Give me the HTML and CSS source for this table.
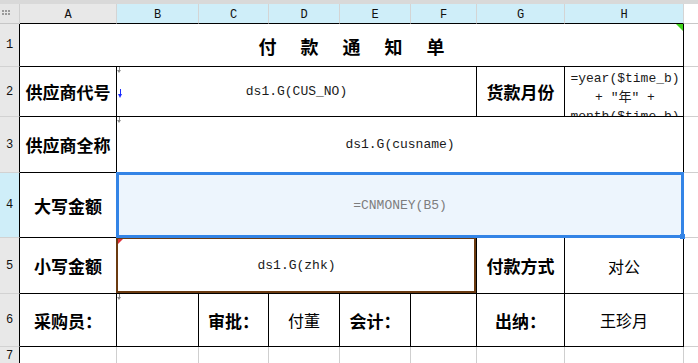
FILE: index.html
```html
<!DOCTYPE html>
<html lang="zh">
<head>
<meta charset="utf-8">
<title>付款通知单</title>
<link rel="stylesheet" href="styles.css">
</head>
<body>
<div class="band"></div>
<div class="sheet">
  <div class="corner">
    <svg width="10" height="7" viewBox="0 0 10 7"><g fill="#9a9a9a"><rect x="0" y="0" width="2" height="2"/><rect x="3" y="0" width="2" height="2"/><rect x="6" y="0" width="2" height="2"/><rect x="0" y="3" width="2" height="2"/><rect x="3" y="3" width="2" height="2"/><rect x="6" y="3" width="2" height="2"/></g></svg>
  </div>
  <div class="ch">A</div>
  <div class="ch on">B</div>
  <div class="ch on">C</div>
  <div class="ch on">D</div>
  <div class="ch on">E</div>
  <div class="ch on">F</div>
  <div class="ch on">G</div>
  <div class="ch on">H</div>
  <div class="ch blank"></div>

  <div class="rh">1</div>
  <div class="c title span8">付款通知单<span class="flag"></span></div>
  <div class="x"></div>

  <div class="rh">2</div>
  <div class="c lbl">供应商代号</div>
  <div class="c val span5">ds1.G(CUS_NO)<span class="garrow"></span><span class="barrow"></span></div>
  <div class="c lbl">货款月份</div>
  <div class="c formula">=year($time_b) + "年" + month($time_b)</div>
  <div class="x"></div>

  <div class="rh">3</div>
  <div class="c lbl">供应商全称</div>
  <div class="c val span7">ds1.G(cusname)<span class="garrow"></span></div>
  <div class="x"></div>

  <div class="rh on">4</div>
  <div class="c lbl">大写金额</div>
  <div class="c val span7 picked">=CNMONEY(B5)<span class="selbox"><span class="handle"></span></span></div>
  <div class="x"></div>

  <div class="rh">5</div>
  <div class="c lbl">小写金额</div>
  <div class="c val span5 copied">ds1.G(zhk)<span class="copybox"></span><span class="redmark"></span></div>
  <div class="c lbl">付款方式</div>
  <div class="c txt">对公</div>
  <div class="x"></div>

  <div class="rh">6</div>
  <div class="c lbl">采购员：</div>
  <div class="c"><span class="garrow"></span></div>
  <div class="c lbl">审批：</div>
  <div class="c txt">付董</div>
  <div class="c lbl">会计：</div>
  <div class="c"></div>
  <div class="c lbl">出纳：</div>
  <div class="c txt">王珍月</div>
  <div class="x"></div>

  <div class="rh last">7</div>
  <div class="e"></div>
  <div class="e"></div>
  <div class="e"></div>
  <div class="e"></div>
  <div class="e"></div>
  <div class="e"></div>
  <div class="e"></div>
  <div class="e"></div>
  <div class="x last"></div>
</div>
</body>
</html>
```
FILE: styles.css
```css
* { box-sizing: border-box; }
html, body { margin: 0; padding: 0; background: #fff; }
body { width: 698px; height: 363px; overflow: hidden; }

.band { height: 4px; background: #d9d9d9; }

.sheet {
  display: grid;
  grid-template-columns: 20px 97px 82px 70px 71px 71px 66px 88px 119px 1fr;
  grid-template-rows: 20px 43px 50px 56px 65px 56px 53px 1fr;
  height: 359px;
  font-family: "Noto Sans CJK SC", sans-serif;
}

.corner {
  background: #e6e6e6;
  border-right: 1px solid #d0d0d0;
  border-bottom: 1px solid #c6c6c6;
  display: flex;
  align-items: center;
  padding-left: 2px;
}

.ch {
  background: #e8e8e8;
  border-right: 1px solid #d4d4d4;
  border-bottom: 1px solid #000;
  display: flex;
  align-items: center;
  justify-content: center;
  padding-top: 2px;
  font-family: "Liberation Mono", monospace;
  font-size: 12px;
  color: #111;
}
.ch.on { background: #cfeef9; }
.ch.blank { background: #fff; border-right: none; border-bottom-color: #c8c8c8; }

.rh {
  background: #e8e8e8;
  border-right: 1px solid #000;
  border-bottom: 1px solid #d2d2d2;
  display: flex;
  align-items: center;
  justify-content: center;
  font-family: "Liberation Mono", monospace;
  font-size: 12px;
  color: #111;
}
.rh.on { background: #cfeef9; }
.rh.last { border-bottom: none; align-items: flex-end; }

.c {
  position: relative;
  border-right: 1px solid #000;
  border-bottom: 1px solid #000;
  display: flex;
  align-items: center;
  justify-content: center;
  color: #000;
}
.span5 { grid-column: span 5; }
.span7 { grid-column: span 7; }
.span8 { grid-column: span 8; }

.title {
  font-size: 18px;
  font-weight: 700;
  letter-spacing: 24px;
  padding-left: 24px;
  padding-top: 1px;
}

.lbl { font-size: 17px; font-weight: 700; }
.txt { font-size: 16px; font-weight: 400; }

.val {
  font-family: "Liberation Mono", "Noto Sans CJK SC", monospace;
  font-size: 13px;
  color: #1a1a1a;
}

.formula {
  align-items: flex-start;
  text-align: center;
  overflow: hidden;
  padding: 2px 1px 0 3px;
  font-family: "Liberation Mono", "Noto Sans CJK SC", monospace;
  font-size: 13px;
  line-height: 19px;
  color: #1a1a1a;
}

.picked { background: #edf5fd; color: #7d7d7d; }

.selbox {
  position: absolute;
  left: -1px; top: -1px; right: -1px; bottom: -1px;
  border: 3px solid #3384e6;
  z-index: 3;
}
.handle {
  position: absolute;
  right: -4px; bottom: -4px;
  width: 5px; height: 5px;
  background: #3384e6;
}

.copybox {
  position: absolute;
  left: -1px; top: -1px; right: 0; bottom: 0;
  border: 2px solid #6a3a10;
  z-index: 2;
}
.redmark {
  position: absolute;
  left: 1px; top: 1px;
  width: 0; height: 0;
  border-top: 5px solid #e0303a;
  border-right: 5px solid transparent;
  z-index: 4;
}

.flag {
  position: absolute;
  right: 0; top: 0;
  width: 0; height: 0;
  border-top: 7px solid #3fd41a;
  border-left: 7px solid transparent;
}

.garrow {
  position: absolute;
  left: 0; top: 0;
  width: 5px; height: 6px;
}
.garrow::before {
  content: "";
  position: absolute;
  left: 2px; top: 0;
  width: 1px; height: 4px;
  background: #8a8a8a;
}
.garrow::after {
  content: "";
  position: absolute;
  left: 0; top: 3px;
  border-top: 3px solid #8a8a8a;
  border-left: 2.5px solid transparent;
  border-right: 2.5px solid transparent;
}

.barrow {
  position: absolute;
  left: 1px; top: 22px;
  width: 5px; height: 9px;
}
.barrow::before {
  content: "";
  position: absolute;
  left: 2px; top: 0;
  width: 1px; height: 6px;
  background: #1a2bff;
}
.barrow::after {
  content: "";
  position: absolute;
  left: 0; top: 5px;
  border-top: 4px solid #1a2bff;
  border-left: 2.5px solid transparent;
  border-right: 2.5px solid transparent;
}

.x { border-bottom: 1px solid #cfcfcf; }
.x.last { border-bottom: none; }
.e { border-right: 1px solid #cfcfcf; }
```
